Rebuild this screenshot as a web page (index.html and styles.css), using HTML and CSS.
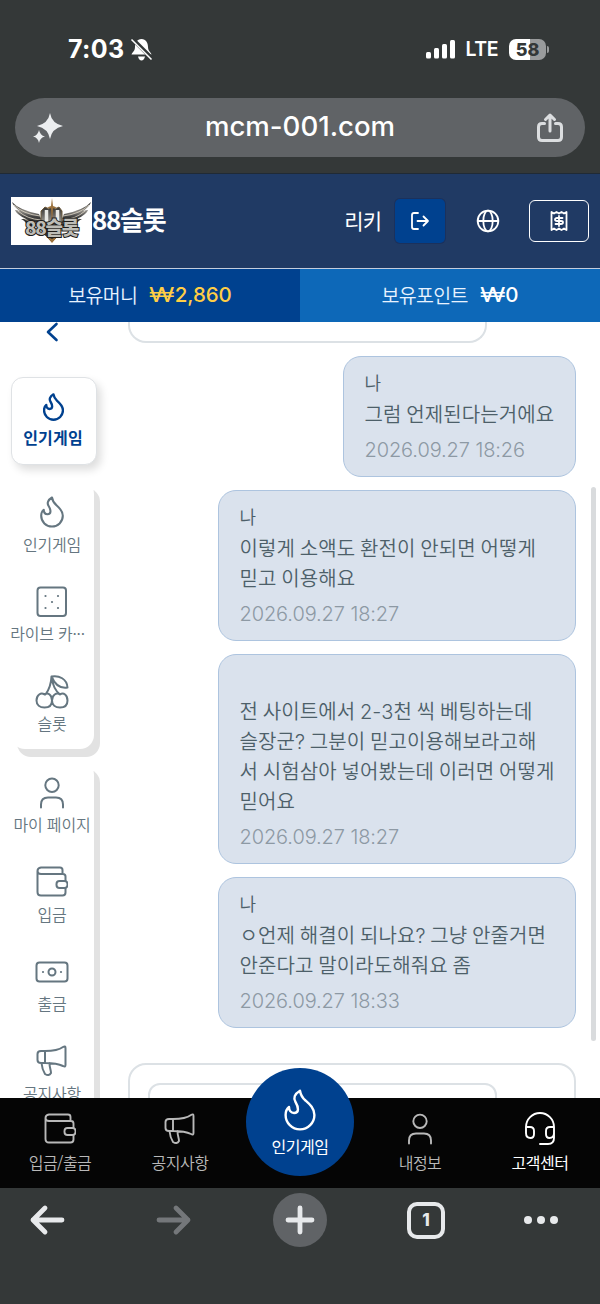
FILE: index.html
```html
<!DOCTYPE html>
<html lang="ko">
<head>
  <meta charset="UTF-8" />
  <meta name="viewport" content="width=device-width, initial-scale=1.0" />
  <title>88슬롯</title>
  <link rel="stylesheet" href="styles.css">
</head>
<body>
  <svg class="sprite" width="0" height="0">
    <symbol id="fire" viewBox="0 0 32 42"><path d="M16 1.7C10.5 5 9 9 11.500 13C14.500 18 15.500 24 10 24C7 24 5 21.500 5 18C2.500 20 1.600 23 1.600 26A14.400 14.400 0 0 0 30.400 26C30.400 19 25.500 15 21.500 11.500C18 8.500 16.500 5 16 1.700Z"/></symbol>
    <symbol id="wallet" viewBox="0 0 32 32"><path d="M1.500 5v21q0 3.500 3.500 3.500h21.500q3 0 3-3v-4.500M29.500 15v-4.500q0-2.500-2.500-2.500H5Q1.500 8 1.500 5T5 1.500h19q2.500 0 2.500 2.500v4"/><rect x="20.500" y="15" width="11" height="7" rx="3"/></symbol>
    <symbol id="horn" viewBox="0 0 32 32"><path d="M9 6H5Q1.500 6 1.500 9v6q0 3 3.500 3h4zM9 6C18 6 23 5 27 2Q29.500 .500 29.500 3v17q0 2.500-2.500 1C23 19 18 18 9 18M5.500 18C6 23 7 26 9 29q4 2.500 6-1C15 25 13.500 23 13.500 18"/></symbol>
    <symbol id="user" viewBox="0 0 32 32"><circle cx="16" cy="8.300" r="6.700"/><path d="M5 30.500v-3q0-7 7-7h8q7 0 7 7v3"/></symbol>
  </svg>

  <div class="browser-top">
    <div class="status">
      <div class="clock">7:03
        <svg width="23" height="23" viewBox="0 0 23 23"><path d="M11.500 1C7 1 5 5 5 9c0 4-2.500 5-3.500 7.500h20C20.500 14 18 13 18 9c0-4-2-8-6.500-8zM8 18.500h7q-1 4-3.500 4t-3.500-4z" fill="#fff"/><path d="M2.500 1l19.500 19.500" stroke="#343838" stroke-width="4"/><path d="M1.500 1.500l20 20" stroke="#fff" stroke-width="1.600"/></svg>
      </div>
      <div class="signal">
        <svg width="30" height="20" viewBox="0 0 30 20" fill="#fff"><rect x="0" y="13" width="5" height="6.500" rx="1.500"/><rect x="8" y="9" width="5" height="10.500" rx="1.500"/><rect x="16" y="5" width="5" height="14.500" rx="1.500"/><rect x="24" y="1" width="5" height="18.500" rx="1.500"/></svg>
        <span class="lte">LTE</span>
        <span class="battery">58</span><i class="battery-tip"></i>
      </div>
    </div>
    <div class="address">
      <svg width="32" height="32" viewBox="0 0 32 32" fill="#eceef0"><path d="M18 1Q19.800 11.500 31 14Q19.800 16.500 18 27Q16.200 16.500 5 14Q16.200 11.500 18 1zM7 18Q8 23.300 13 24.500Q8 25.700 7 31Q6 25.700 1 24.500Q6 23.300 7 18z"/></svg>
      <span class="url">mcm-001.com</span>
      <svg width="28" height="30" viewBox="0 0 28 30" fill="none" stroke="#dcdee0" stroke-width="3" stroke-linecap="round" stroke-linejoin="round"><path d="M8.500 10.500H6q-3.500 0-3.500 3.500v10q0 3.500 3.500 3.500h16q3.500 0 3.500-3.500V14q0-3.500-3.500-3.500h-2.500M14 18V3M9.500 6.500L14 2l4.500 4.500"/></svg>
    </div>
  </div>

  <header class="header">
    <svg class="logo" width="81" height="48" viewBox="0 0 81 48">
      <defs><linearGradient id="steel" x1="0" y1="0" x2="0" y2="1"><stop offset="0" stop-color="#2b2a28"/><stop offset=".4" stop-color="#8d8a84"/><stop offset=".6" stop-color="#444"/><stop offset="1" stop-color="#24211c"/></linearGradient></defs>
      <rect width="81" height="48" fill="#fff"/>
      <path d="M1 5Q8 13 28 17L33 29L16 29Q15 24 10 22L15 22Q5 17 4 13L9 14Q2 9 1 5zM80 5Q73 13 53 17L48 29L65 29Q66 24 71 22L66 22Q76 17 77 13L72 14Q79 9 80 5z" fill="url(#steel)"/>
      <path d="M3 8Q12 17 29 19M7 14Q16 22 30 23M12 21Q20 26 31 26M78 8Q69 17 52 19M74 14Q65 22 51 23M69 21Q61 26 50 26" fill="none" stroke="#e0d8c8" stroke-width=".8"/>
      <path d="M30 14L34 10L38 12L41 9L44 12L48 10L51 14V27L48 38L41 45L34 38L30 27z" fill="url(#steel)" stroke="#6d5a3c"/>
      <path d="M35.500 13v13M46.500 13v13" stroke="#e8e8e4" stroke-width="3.500"/>
      <path d="M41 1l1 8 4 1.500-4 1L41 26l-1-14.500-4-1 4-1.500zM35 39l6 3 6-3-6 7z" fill="#9b713c"/>
      <text class="logo-text" x="40.500" y="37.500" text-anchor="middle">88슬롯</text>
    </svg>
    <span class="site">88슬롯</span>
    <span class="member">리키</span>
    <button class="logout"><svg width="18" height="18" viewBox="0 0 18 18"><path d="M7 1H3Q1 1 1 3v12q0 2 2 2h4M6.500 9H17M12.500 4.500L17 9l-4.500 4.500"/></svg></button>
    <button class="lang"><svg width="24" height="24" viewBox="0 0 24 24"><circle cx="12" cy="12" r="10.300"/><ellipse cx="12" cy="12" rx="4.700" ry="10.300"/><path d="M1.700 12h20.600"/></svg></button>
    <button class="receipt"><svg width="18" height="22" viewBox="0 0 18 22"><path d="M1.500 2l2.500 1.500L6.500 2 9 3.500 11.500 2 14 3.500 16.500 2v18L14 18.500 11.500 20 9 18.500 6.500 20 4 18.500 1.500 20zM12.500 8H7q-2 0-2 1.500T7 11h4q2 0 2 1.500T11 14H5.500M9 6v10"/></svg></button>
  </header>

  <div class="balance">
    <div class="money">보유머니 <b><span class="won">₩</span>2,860</b></div>
    <div class="point">보유포인트 <b><span class="won">₩</span>0</b></div>
  </div>

  <main class="main">
    <aside class="side">
      <svg class="back" width="14" height="20" viewBox="0 0 14 20"><path d="M11.500 2L3 10l8.500 8"/></svg>
      <div class="side-active">
        <svg width="21" height="28"><use href="#fire"/></svg>
        <span>인기게임</span>
      </div>
      <div class="side-group">
        <div class="side-item"><svg class="fire" width="24" height="32"><use href="#fire"/></svg><span>인기게임</span></div>
        <div class="side-item"><svg width="32" height="32" viewBox="0 0 32 32"><rect x="1.500" y="1.500" width="28.500" height="28.500" rx="3"/><path class="pips" d="M9.500 10h.010M22 10h.010M16 16h.010M9.500 22h.010M22 22h.010"/></svg><span class="cut">라이브 카···</span></div>
        <div class="side-item"><svg width="34" height="34" viewBox="0 0 34 34"><path d="M9.500 19.500C6 17 1.500 20 1.500 25.500C1.500 30 5 32.500 9.500 32.500S17 30 17 25.500C17 20 13 17 9.500 19.500zM25 19.500C21.500 17 17 20 17 25.500C17 30 20.500 32.500 25 32.500S32.500 30 32.500 25.500C32.500 20 28.500 17 25 19.500zM10.500 19.500Q16 12 16.500 1.500Q18 14 25 19.500M16.500 1.500C24 0 32 4 32.500 12.500C26 13.500 20 10 16.500 1.500"/></svg><span>슬롯</span></div>
      </div>
      <div class="side-group">
        <div class="side-item"><svg width="32" height="32"><use href="#user"/></svg><span>마이 페이지</span></div>
        <div class="side-item"><svg width="32" height="32"><use href="#wallet"/></svg><span>입금</span></div>
        <div class="side-item"><svg width="34" height="32" viewBox="0 0 34 32"><rect x="1.500" y="6.500" width="31" height="19" rx="3"/><circle cx="17" cy="16" r="3.500"/><path class="pips" d="M8 16h.010M26 16h.010"/></svg><span>출금</span></div>
        <div class="side-item"><svg width="32" height="32"><use href="#horn"/></svg><span>공지사항</span></div>
      </div>
    </aside>

    <section class="chat">
      <div class="reply"></div>
      <div class="message short">
        <div class="name">나</div>
        <div class="text">그럼 언제된다는거에요</div>
        <div class="date">2026.09.27 18:26</div>
      </div>
      <div class="message">
        <div class="name">나</div>
        <div class="text">이렇게 소액도 환전이 안되면 어떻게<br>믿고 이용해요</div>
        <div class="date">2026.09.27 18:27</div>
      </div>
      <div class="message">
        <div class="name empty"></div>
        <div class="text">전 사이트에서 2-3천 씩 베팅하는데<br>슬장군? 그분이 믿고이용해보라고해<br>서 시험삼아 넣어봤는데 이러면 어떻게<br>믿어요</div>
        <div class="date">2026.09.27 18:27</div>
      </div>
      <div class="message">
        <div class="name">나</div>
        <div class="text">ㅇ언제 해결이 되나요? 그냥 안줄거면<br>안준다고 말이라도해줘요 좀</div>
        <div class="date">2026.09.27 18:33</div>
      </div>
      <div class="write"><div class="input"></div></div>
    </section>
    <div class="scrollbar"></div>
  </main>

  <nav class="nav">
    <div class="nav-item"><svg width="32" height="32"><use href="#wallet"/></svg><span>입금/출금</span></div>
    <div class="nav-item"><svg width="32" height="32"><use href="#horn"/></svg><span>공지사항</span></div>
    <div class="nav-item"><div class="nav-center"><svg width="32" height="42"><use href="#fire"/></svg><span>인기게임</span></div></div>
    <div class="nav-item"><svg width="32" height="32"><use href="#user"/></svg><span>내정보</span></div>
    <div class="nav-item on"><svg width="32" height="34" viewBox="0 0 32 34"><path d="M2 17v-2a14 14 0 0 1 28 0v11q0 6-6 6h-8M2 15h4q4 0 4 4v3q0 4-3.500 4Q2 26 2 21zM30 15h-4q-4 0-4 4v3q0 4 3.500 4Q30 26 30 21z"/></svg><span>고객센터</span></div>
  </nav>

  <footer class="toolbar">
    <svg width="36" height="32" viewBox="0 0 36 32"><path d="M33 16H4M16 4L4 16l12 12"/></svg>
    <svg class="off" width="36" height="32" viewBox="0 0 36 32"><path d="M3 16h29M20 4l12 12-12 12"/></svg>
    <div class="plus"><svg width="30" height="30" viewBox="0 0 30 30"><path d="M15 3v24M3 15h24"/></svg></div>
    <div class="tabs">1</div>
    <div class="dots"><i></i><i></i><i></i></div>
  </footer>
</body>
</html>
```
FILE: styles.css
```css
* {
  box-sizing: border-box;
}
body {
  margin: 0;
  width: 600px;
  height: 1304px;
  overflow: hidden;
  background: #343838;
  font-family: "Noto Sans CJK KR", sans-serif;
  font-weight: 350;
}
svg {
  display: block;
  flex: none;
  overflow: visible;
}
.sprite {
  position: absolute;
}
button {
  display: flex;
  align-items: center;
  justify-content: center;
  padding: 0;
  border: 0;
  background: none;
}

/* browser */
.browser-top {
  height: 174px;
  color: #fff;
  font-family: Inter, sans-serif;
  border-bottom: 1px solid #202a35;
}
.status {
  display: flex;
  justify-content: space-between;
  align-items: center;
  height: 98px;
  padding: 0 51px 0 68px;
}
.clock, .signal {
  display: flex;
  align-items: center;
}
.clock {
  gap: 5px;
  font-size: 25px;
  font-weight: 700;
  letter-spacing: 0.4px;
}
.lte {
  margin: 0 11px 0 10px;
  font-size: 19.5px;
  font-weight: 600;
  letter-spacing: -0.5px;
}
.battery {
  width: 37px;
  height: 21px;
  border-radius: 7px;
  background: linear-gradient(90deg, #fff 58%, #999b9c 58%);
  color: #343838;
  font-size: 18px;
  font-weight: 800;
  line-height: 21px;
  text-align: center;
}
.battery-tip {
  width: 2px;
  height: 7px;
  margin-left: 1px;
  border-radius: 0 3px 3px 0;
  background: #999b9c;
}
.address {
  display: flex;
  align-items: center;
  justify-content: space-between;
  width: 570px;
  height: 59px;
  margin: 0 auto;
  padding: 0 21px 0 17px;
  border-radius: 30px;
  background: #606366;
}
.url {
  font-size: 27.6px;
  font-weight: 500;
  line-height: 34px;
  padding-bottom: 3px;
}

/* header */
.header {
  display: flex;
  align-items: center;
  height: 95px;
  padding: 0 11px;
  background: #203a64;
  border-bottom: 1px solid #c4cddd;
  color: #fff;
}
.header button svg {
  fill: none;
  stroke: #fff;
  stroke-width: 1.8;
  stroke-linecap: round;
  stroke-linejoin: round;
}
.logo-text {
  fill: #bdbcb6;
  stroke: #1f1c19;
  stroke-width: 2;
  paint-order: stroke;
  font-size: 19px;
  font-weight: 900;
  letter-spacing: -1.3px;
}
.site {
  flex: 1;
  padding-bottom: 5px;
  font-size: 26px;
  font-weight: 700;
  letter-spacing: -1.3px;
}
.member {
  margin-right: 14px;
  padding-bottom: 3px;
  font-size: 21px;
  font-weight: 400;
  letter-spacing: -1px;
}
.logout {
  width: 50px;
  height: 44px;
  border-radius: 5px;
  background: #00418f;
  box-shadow: 0 0 0 1px #1b315c;
}
.lang {
  width: 44px;
  height: 44px;
  margin: 0 19px 0 21px;
}
.receipt {
  width: 60px;
  height: 42px;
}
.header .receipt {
  border: 1.5px solid #fff;
  border-radius: 6px;
}
.balance {
  display: flex;
  height: 53px;
  color: #e8f3ff;
  font-size: 19.5px;
  line-height: 52px;
  letter-spacing: -0.7px;
}
.balance div {
  flex: 1;
  display: flex;
  justify-content: center;
  gap: 12px;
}
.balance b {
  font-family: Inter, sans-serif;
  font-size: 20.5px;
  font-weight: 500;
  letter-spacing: -0.1px;
}
.won {
  display: inline-block;
  margin: 0 3px;
  font-weight: 400;
  transform: scaleX(1.3);
}
.money {
  background: #00418f;
}
.point {
  background: #0d68b8;
}
.money b {
  color: #ffce45;
}
.point b {
  color: #fff;
}

/* content */
.main {
  position: relative;
  display: flex;
  height: 776px;
  overflow: hidden;
  background: #fff;
}
.side {
  width: 128px;
  flex: none;
  padding-left: 11px;
  color: #657680;
}
.side svg {
  fill: none;
  stroke: #657680;
  stroke-width: 2;
  stroke-linecap: round;
  stroke-linejoin: round;
}
.side .back {
  margin: 0 0 35px 34px;
  stroke: #00418f;
  stroke-width: 2.6;
}
.side-active {
  display: flex;
  flex-direction: column;
  align-items: center;
  width: 86px;
  height: 88px;
  padding: 15px 2px 0 0;
  border: 1px solid #dfe2e5;
  border-radius: 12px;
  background: #fff;
  box-shadow: 4px 5px 9px #0002;
  color: #00418f;
  font-size: 16px;
  font-weight: 700;
  line-height: 26px;
  letter-spacing: 0.2px;
}
.side-active svg {
  margin-bottom: 3px;
  stroke: #00418f;
  stroke-width: 3.6;
}
.side-active + .side-group {
  margin-top: 15px;
}
.side-group {
  width: 83px;
  margin-bottom: 12px;
  border-radius: 14px;
  background: #fff;
  box-shadow: 6px 8px 0 #e2e2e2;
}
.side-item {
  display: flex;
  flex-direction: column;
  align-items: center;
  height: 89.5px;
  padding: 16px 1px 0 0;
  font-size: 16px;
  line-height: 24px;
  letter-spacing: -0.2px;
  white-space: nowrap;
}
.side-item span {
  margin-top: auto;
  margin-bottom: 14px;
}
.side-item .cut {
  margin-right: 9px;
}
.side-item .fire {
  stroke-width: 2.8;
}
.side .pips {
  stroke-width: 2.2;
}
.chat {
  display: flex;
  flex-direction: column;
  align-items: flex-end;
  gap: 12.5px;
  width: 448px;
}
.reply {
  flex: none;
  width: 359px;
  height: 21px;
  align-self: flex-start;
  border: 2px solid #dce1e5;
  border-top: 0;
  border-radius: 0 0 18px 18px;
}
.message {
  flex: none;
  width: 358px;
  padding: 12px 20.5px 12.5px;
  border: 1.5px solid #adc4df;
  border-radius: 18px;
  background: #dae2ed;
  color: #4d5f69;
  white-space: nowrap;
}
.short {
  width: 233px;
}
.name {
  height: 31px;
  font-size: 18px;
  line-height: 27px;
}
.empty {
  height: 30px;
}
.text {
  font-family: Inter, "Noto Sans CJK KR", sans-serif;
  font-size: 20px;
  line-height: 30px;
  letter-spacing: 0.1px;
  word-spacing: -1px;
}
.date {
  margin-top: 6px;
  color: #8d99a4;
  font-family: Inter, sans-serif;
  font-size: 20px;
  font-weight: 300;
  line-height: 28px;
  letter-spacing: -0.1px;
}
.write {
  flex: none;
  width: 448px;
  height: 150px;
  margin-top: 22px;
  padding: 18px;
  border: 2px solid #dce1e5;
  border-radius: 18px;
}
.input {
  width: 349px;
  height: 60px;
  border: 2px solid #dce1e5;
  border-radius: 12px;
}
.scrollbar {
  position: absolute;
  top: 165px;
  right: 4px;
  width: 5px;
  height: 554px;
  border-radius: 3px;
  background: #d9dbdd;
}

/* bottom menu */
.nav {
  position: relative;
  display: flex;
  height: 90px;
  background: #050505;
  color: #b9b9b9;
  font-size: 16px;
  line-height: 24px;
  letter-spacing: -0.5px;
}
.nav-item {
  display: flex;
  flex-direction: column;
  align-items: center;
  width: 120px;
  padding-top: 14px;
}
.nav svg {
  height: 34px;
  margin-bottom: 4px;
  fill: none;
  stroke: #b9b9b9;
  stroke-width: 1.9;
  stroke-linecap: round;
  stroke-linejoin: round;
}
.nav .on, .nav-center {
  color: #fff;
  font-weight: 400;
}
.nav .on svg, .nav .nav-center svg {
  stroke: #fff;
}
.nav-center {
  display: flex;
  flex-direction: column;
  align-items: center;
  flex: none;
  width: 108px;
  height: 108px;
  margin-top: -44px;
  padding-top: 21px;
  border-radius: 50%;
  background: #00418f;
}
.nav .nav-center svg {
  height: 42px;
  margin-bottom: 3px;
  stroke-width: 2.4;
}

/* browser toolbar */
.toolbar {
  display: grid;
  grid-template-columns: 94px 160px 92px 160px 70px;
  align-items: center;
  justify-items: center;
  height: 64px;
}
.toolbar svg {
  fill: none;
  stroke: #e7e9eb;
  stroke-width: 4.8;
  stroke-linecap: round;
  stroke-linejoin: round;
}
.toolbar .off {
  stroke: #74777a;
}
.plus {
  display: flex;
  align-items: center;
  justify-content: center;
  width: 54px;
  height: 54px;
  border-radius: 50%;
  background: #606366;
}
.tabs {
  width: 38px;
  height: 37px;
  border: 4px solid #e7e9eb;
  border-radius: 10px;
  color: #e7e9eb;
  font-family: Inter, sans-serif;
  font-size: 17px;
  font-weight: 800;
  line-height: 29px;
  text-align: center;
}
.dots {
  display: flex;
  gap: 5px;
}
.dots i {
  width: 8px;
  height: 8px;
  border-radius: 50%;
  background: #e7e9eb;
}
```
